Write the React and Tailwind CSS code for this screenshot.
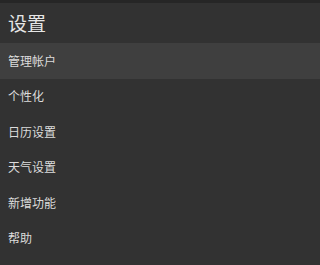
const items = ["管理帐户", "个性化", "日历设置", "天气设置", "新增功能", "帮助"];

export default function App() {
  return (
    <div
      className="w-full min-w-[204px] h-screen min-h-[265px] bg-[#323232] flex flex-col overflow-hidden"
      style={{ fontFamily: '"Noto Sans CJK SC", "Noto Sans", sans-serif' }}
    >
      <div className="h-[3px] bg-[#262626]" />
      <div className="h-[40px] flex items-center pl-2 pb-[2px] text-[19px] text-[#e6e6e6] leading-none">
        设置
      </div>
      <ul className="flex flex-col">
        {items.map((label, i) => (
          <li
            key={label}
            className={
              "h-[35.5px] flex items-center pl-2 text-[12px] text-[#dcdcdc] leading-none " +
              (i === 0 ? "bg-[#3f3f3f]" : "")
            }
          >
            {label}
          </li>
        ))}
      </ul>
    </div>
  );
}
